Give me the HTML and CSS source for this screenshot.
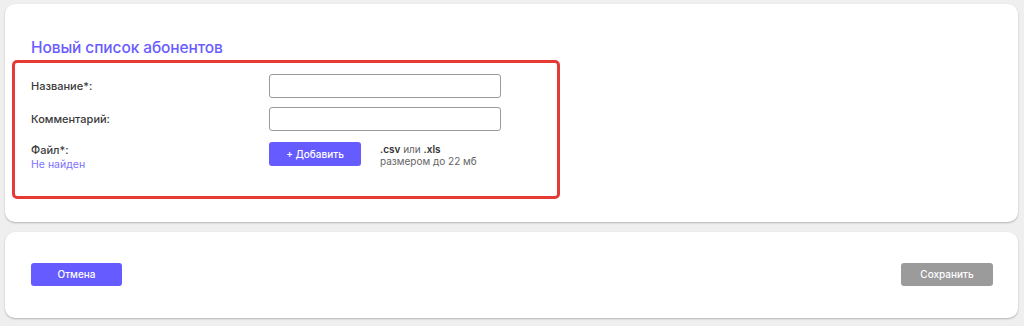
FILE: index.html
```html
<!DOCTYPE html>
<html lang="ru">
<head>
<meta charset="utf-8">
<link rel="stylesheet" href="styles.css">
</head>
<body>
<div class="page">
  <section class="card card-form">
    <h1 class="title">Новый список абонентов</h1>
    <div class="frame">
      <div class="row">
        <div class="label">Название*:</div>
        <input class="field" type="text">
      </div>
      <div class="row">
        <div class="label">Комментарий:</div>
        <input class="field" type="text">
      </div>
      <div class="row row-file">
        <div class="label-block">
          <div class="label">Файл*:</div>
          <div class="note">Не найден</div>
        </div>
        <div class="file-ctl">
          <button class="btn btn-primary btn-add">+ Добавить</button>
          <div class="hint">
            <div><b>.csv</b> или <b>.xls</b></div>
            <div>размером до 22 мб</div>
          </div>
        </div>
      </div>
    </div>
  </section>
  <section class="card card-actions">
    <button class="btn btn-primary">Отмена</button>
    <button class="btn btn-disabled">Сохранить</button>
  </section>
</div>
</body>
</html>
```
FILE: styles.css
```css
* { box-sizing: border-box; }
html, body { margin: 0; padding: 0; }
body {
  background: #efefef;
  font-family: Inter, "Noto Sans", sans-serif;
  color: #333;
  width: 1024px;
  height: 326px;
  overflow: hidden;
}
.page {
  padding: 4px 6px 0 5px;
  display: flex;
  flex-direction: column;
  gap: 10px;
}
.card {
  background: #fff;
  border-radius: 10px;
  box-shadow: 0 1px 2px rgba(0,0,0,0.25);
}
.card-form {
  height: 218px;
  padding: 0 7px;
}
.title {
  margin: 0;
  padding: 34px 0 0 19px;
  font-size: 15.5px;
  line-height: 20px;
  font-weight: 500;
  color: #6a5cff;
  letter-spacing: -0.1px;
}
.frame {
  margin-top: 2px;
  width: 548px;
  height: 139px;
  border: 3px solid #e53a35;
  border-radius: 5px;
  padding: 11px 0 0 16px;
  display: flex;
  flex-direction: column;
  gap: 9px;
}
.row {
  display: flex;
  align-items: center;
  height: 24px;
}
.row-file {
  margin-top: 2px;
  align-items: flex-start;
  height: auto;
}
.label, .label-block {
  width: 238px;
  flex: none;
}
.label {
  font-size: 11px;
  font-weight: 500;
  color: #3a3a3a;
}
.label-block .label { padding-top: 1px; line-height: 14px; }
.note {
  margin-top: 1px;
  font-size: 10.5px;
  color: #7b72ff;
}
.field {
  width: 232px;
  height: 24px;
  border: 1px solid #9a9a9a;
  border-radius: 3px;
  background: #fff;
  outline: none;
}
.file-ctl {
  display: flex;
  gap: 19px;
}
.btn {
  border: none;
  border-radius: 3px;
  height: 24px;
  width: 92px;
  font-family: inherit;
  font-size: 10px;
  font-weight: 500;
  color: #fff;
  padding: 0;
}
.btn-primary { background: #655bff; }
.btn-disabled { background: #9b9b9b; }
.hint {
  font-size: 10px;
  line-height: 12px;
  color: #666;
  padding-top: 1px;
}
.hint b { color: #333; font-weight: 600; }
.card-actions {
  height: 86px;
  padding: 0 25px 2px 26px;
  display: flex;
  align-items: center;
  justify-content: space-between;
}
.card-actions .btn { height: 23px; width: 91px; }
.card-actions .btn-disabled { width: 92px; }
```
